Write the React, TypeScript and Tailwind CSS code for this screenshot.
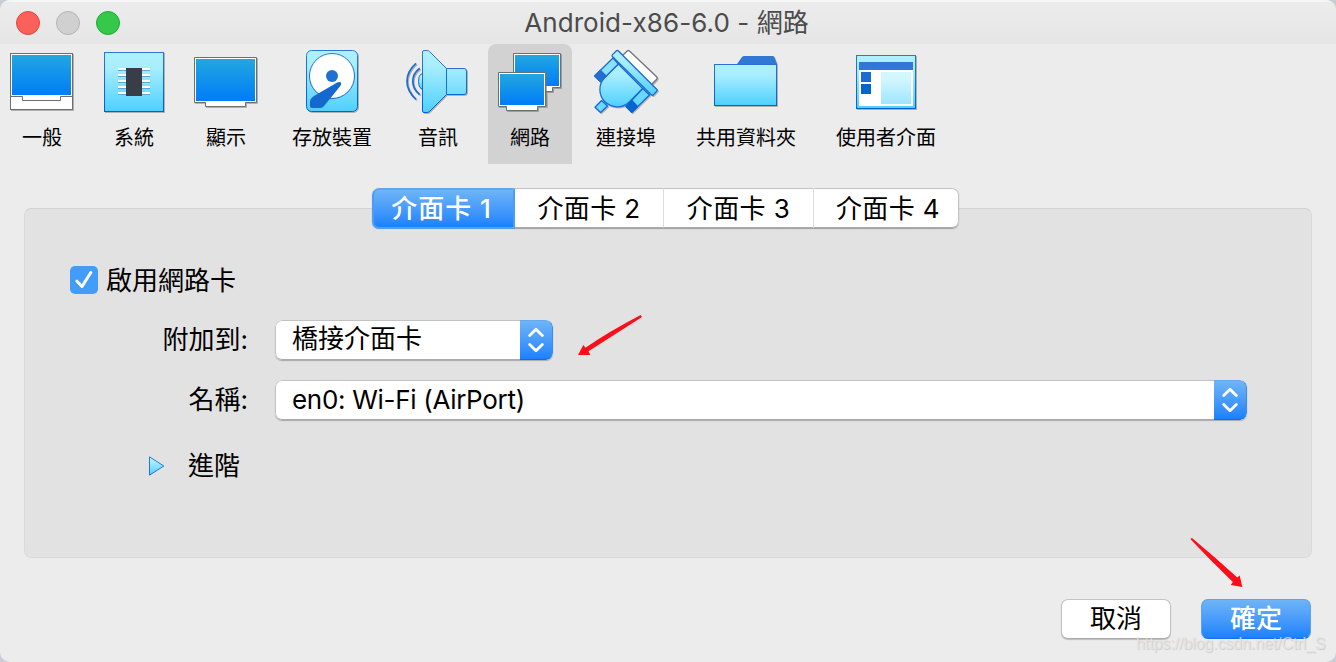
import type { ReactNode } from "react";

function Icon({ children }: { children: ReactNode }) {
  return (
    <svg
      width="64"
      height="64"
      viewBox="0 0 64 64"
      className="block shrink-0 overflow-visible drop-shadow-[1px_1px_0px_rgba(0,0,0,0.25)]"
    >
      {children}
    </svg>
  );
}

function Gradients() {
  return (
    <svg width="0" height="0" className="absolute">
      <defs>
        <linearGradient id="screen" x1="0" y1="0" x2="0" y2="1">
          <stop offset="0" stopColor="#22a7df" />
          <stop offset="1" stopColor="#007cf8" />
        </linearGradient>
        <linearGradient id="aqua" x1="0" y1="0" x2="0" y2="1">
          <stop offset="0" stopColor="#aef1ff" />
          <stop offset="0.25" stopColor="#a9eeff" />
          <stop offset="1" stopColor="#4ed0ff" />
        </linearGradient>
        <linearGradient id="edge" gradientUnits="userSpaceOnUse" x1="0" y1="0" x2="0" y2="62">
          <stop offset="0" stopColor="#3078d4" />
          <stop offset="1" stopColor="#0060d0" />
        </linearGradient>
      </defs>
    </svg>
  );
}

const GeneralIcon = () => (
  <Icon>
    <rect x="0.5" y="3.5" width="62" height="56" fill="#fff" stroke="#6f6f6f" />
    <rect x="2" y="5" width="59" height="40" fill="url(#screen)" />
    <path d="M0.5 46.5H12.5V50.5H50.5V46.5H62.5" fill="none" stroke="#6f6f6f" />
  </Icon>
);

const SystemIcon = () => (
  <Icon>
    <rect x="2.5" y="2.5" width="59" height="59" fill="url(#aqua)" stroke="url(#edge)" />
    {[18, 24, 30, 36, 42].map((y) => (
      <g key={y}>
        <rect x="16" y={y} width="32" height="2" fill="#fff" />
        <rect x="16" y={y + 2} width="32" height="1" fill="#5ba5d8" />
      </g>
    ))}
    <rect x="24" y="18" width="16" height="28" fill="#393d48" />
  </Icon>
);

const DisplayIcon = () => (
  <Icon>
    <path d="M0.5 7.5H62.5V52.5H51.5V56.5H11.5V52.5H0.5Z" fill="#fff" stroke="#6f6f6f" />
    <rect x="2" y="9" width="59" height="42" fill="url(#screen)" />
  </Icon>
);

const StorageIcon = () => (
  <Icon>
    <rect x="6.5" y="0.5" width="51" height="61" rx="5" fill="url(#aqua)" stroke="url(#edge)" />
    <circle cx="32" cy="26" r="22.5" fill="#fff" stroke="url(#edge)" />
    <circle cx="32" cy="26" r="6" fill="#2070d3" />
    <path
      d="M37.2 32.4L14 46C11 48.2 10 49.5 10 52V56Q10 58 12 58H20Q22.5 58 24.5 55.5L40.3 36C42.5 32.5 40 31 37.2 32.4Z"
      fill="#1468cf"
    />
  </Icon>
);

const AudioIcon = () => (
  <Icon>
    <path d="M16.5 24H15Q12.5 26 12.5 31.3Q12.5 36.8 15 38.7H16.5Z" fill="url(#aqua)" stroke="#1c6cd2" />
    <path
      d="M16.5 2Q16.5 0.5 18 0.5H21Q22.5 0.5 23.5 1.5L40.5 18.5H58Q60.5 18.5 60.5 21V42Q60.5 44.5 58 44.5H40.5L24 61Q22.5 62.5 21 62.5H18Q16.5 62.5 16.5 61Z"
      fill="url(#aqua)"
      stroke="url(#edge)"
    />
    <path d="M40.5 18.5V44.5" stroke="#1c6cd2" />
    <path d="M13.7 18.3Q6.8 23.5 6.8 31.3T13.7 44.6M10 13.3Q1 21.3 1 31.3T10 49.3" fill="none" stroke="#206dd2" strokeWidth="1.8" />
  </Icon>
);

const NetworkIcon = () => (
  <Icon>
    <path d="M15.5 3.5H62.5V37.5H54.5V41.5H15.5Z" fill="#fff" stroke="#6f6f6f" />
    <rect x="17" y="5" width="44" height="31" fill="url(#screen)" />
    <path d="M48.5 23V57" fill="none" stroke="#777" strokeOpacity="0.6" />
    <path d="M0.5 22.5H47.5V56.5H39.5V60.5H8.5V56.5H0.5Z" fill="#fff" stroke="#6f6f6f" />
    <rect x="2" y="24" width="44" height="31" fill="url(#screen)" />
  </Icon>
);

const PortsIcon = () => (
  <Icon>
    <g strokeWidth="1.3" strokeLinejoin="round">
      <path d="M28 6L33.2 1Q34.3 0 35.4 1L62.6 26.8Q63.6 28 62.6 29.2L57 35Z" fill="#fff" stroke="#777" />
      <path d="M7.5 50.5L1 57.3L6.6 62.5L13.5 56Z" fill="#6bd9ff" stroke="#1169d1" />
      <path d="M24.3 14L10.5 27.8A17.3 17.3 0 0 0 35 52.2L48.7 38.5Z" fill="url(#aqua)" stroke="#1c6cd2" />
      <path d="M19 8L0.7 26L6.5 31.6L24.3 14Z" fill="#88e3ff" stroke="#1c6cd2" />
      <path d="M6.3 20.3L12.3 26.2L6.6 31.8L0.6 26Z" fill="#236fd4" stroke="#236fd4" />
      <path d="M48.7 38.5L32 56.6L37.8 62.4L55.5 45Z" fill="#69d8ff" stroke="#1169d1" />
      <path d="M38 50.7L43.7 56.6L37.8 62.4L32 56.6Z" fill="#0964d2" stroke="#0964d2" />
      <path d="M22.2 1Q23.3 0 24.4 1L62.6 39.2Q63.7 40.3 62.6 41.4L59.4 44.7Q58.3 45.8 57.2 44.7L18.6 6.8Q17.5 5.7 18.6 4.6Z" fill="url(#aqua)" stroke="#1c6cd2" />
    </g>
  </Icon>
);

const FolderIcon = () => (
  <Icon>
    <path d="M23 14L28 7Q29 6 30 6H58.5Q59.7 6 60.3 7L63 14V20H23Z" fill="#3078d4" />
    <rect x="0.5" y="14.5" width="62" height="41" fill="url(#aqua)" stroke="url(#edge)" />
  </Icon>
);

const InterfaceIcon = () => (
  <Icon>
    <rect x="2.5" y="5.5" width="59" height="53" fill="url(#aqua)" stroke="url(#edge)" />
    <rect x="5" y="12" width="54" height="8" fill="#3078d4" />
    <rect x="5" y="20" width="54" height="36" fill="#fff" />
    <rect x="7" y="22" width="10" height="10" fill="#1b6cd2" />
    <rect x="7" y="34" width="10" height="10" fill="#0663d1" />
    <rect x="27" y="22" width="30" height="32" fill="url(#aqua)" opacity="0.55" />
  </Icon>
);

const tools = [
  { label: "一般", width: "w-[84px]", icon: <GeneralIcon /> },
  { label: "系統", width: "w-[84px]", icon: <SystemIcon /> },
  { label: "顯示", width: "w-[84px]", icon: <DisplayIcon /> },
  { label: "存放裝置", width: "w-[112px]", icon: <StorageIcon /> },
  { label: "音訊", width: "w-[84px]", icon: <AudioIcon /> },
  { label: "網路", width: "w-[84px]", icon: <NetworkIcon />, selected: true },
  { label: "連接埠", width: "w-[92px]", icon: <PortsIcon /> },
  { label: "共用資料夾", width: "w-[132px]", icon: <FolderIcon /> },
  { label: "使用者介面", width: "w-[132px]", icon: <InterfaceIcon /> },
];

function Select({ value, width, text }: { value: string; width: string; text: string }) {
  return (
    <button
      className={`${width} flex h-10 items-stretch overflow-hidden rounded-[7px] bg-white text-left shadow-[0_1px_1px_rgba(0,0,0,0.25)]`}
    >
      <span className="flex flex-1 items-center rounded-l-[7px] border border-r-0 border-[#c3c3c3] border-b-[#aaa] pl-4">
        <span className={text}>{value}</span>
      </span>
      <span className="flex w-[33px] items-center justify-center rounded-r-[7px] border border-l-0 border-t-[#65a9ef] border-r-[#3b8bf0] border-b-[#0f68ee] bg-linear-to-b from-[#6eb4f7] to-[#1981fd]">
        <svg width="16" height="26" viewBox="0 0 16 26" fill="none" stroke="#fff" strokeWidth="2.8" strokeLinecap="round" strokeLinejoin="round">
          <path d="M1.7 8.6L8 2.3L14.3 8.6M1.7 17.4L8 23.7L14.3 17.4" />
        </svg>
      </span>
    </button>
  );
}

export default function App() {
  return (
    <div className="h-[662px] w-[1336px] bg-[#c9cdd4] font-['Inter','Noto_Sans_CJK_TC',sans-serif] text-[26px] leading-10 text-black">
      <Gradients />
      <div className="relative flex h-full flex-col overflow-hidden rounded-[10px] bg-[#ececec]">
        <header className="grid h-11 shrink-0 grid-cols-[1fr_auto_1fr] items-center border-t-2 border-[#f6f6f6] bg-linear-to-b from-[#ececec] to-[#e6e6e6]">
          <div className="flex gap-4 pl-4">
            <span className="size-6 rounded-full border border-[#e2463f] bg-[#fc605b]" />
            <span className="size-6 rounded-full border border-[#b4b4b4] bg-[#d0d0d0]" />
            <span className="size-6 rounded-full border border-[#1fac32] bg-[#34c94a]" />
          </div>
          <h1 className="pr-[3px] text-[26px] tracking-[0.07px] text-[#4b4b4b]">Android-x86-6.0 - 網路</h1>
        </header>

        <nav className="flex h-[120px] shrink-0 gap-2">
          {tools.map((t) => (
            <button
              key={t.label}
              className={`${t.width} ${t.selected ? "rounded-t-lg bg-[#d2d2d2]" : ""} flex flex-col items-center pt-1.5 text-[20px] leading-7`}
            >
              {t.icon}
              <span className="mt-2.5">{t.label}</span>
            </button>
          ))}
        </nav>

        <div className="relative z-10 mt-6 ml-[372px] flex h-10 w-[587px] shrink-0 rounded-[7px] bg-white text-center shadow-[0_1px_1px_rgba(0,0,0,0.3)]">
          <button className="h-[41px] w-[143px] rounded-l-[7px] border-2 border-t-[#5ea7ee] border-r-[#4b9cf6] border-b-[#5c9de9] border-l-[#4c9bf4] bg-linear-to-b from-[#6eb4f7] to-[#1981fd] pr-1 leading-[37px] font-medium tracking-[1px] text-white">
            介面卡 1
          </button>
          <button className="w-[148px] border-y border-[#c3c3c3] border-b-[#aaa] pt-px leading-[38px] tracking-[0.4px]">介面卡 2</button>
          <button className="w-[150px] border-y border-l border-[#c3c3c3] border-b-[#aaa] border-l-[#ddd] pt-px leading-[38px] tracking-[0.4px]">介面卡 3</button>
          <button className="w-[146px] rounded-r-[7px] border border-[#c3c3c3] border-b-[#aaa] border-l-[#ddd] pt-px pl-1 leading-[38px] tracking-[0.4px]">介面卡 4</button>
        </div>

        <main className="-mt-5 ml-6 flex h-[350px] w-[1288px] shrink-0 flex-col rounded-[7px] border border-[#dadada] border-t-[#d2d2d2] bg-[#e2e2e2] pt-[51px] pl-[45px]">
          <label className="flex h-10 items-center gap-2">
            <span className="flex size-7 items-center justify-center rounded-[5px] bg-[#429cf9]">
              <svg width="18" height="20" viewBox="0 0 18 20" fill="none" stroke="#fff" strokeWidth="3" strokeLinecap="round" strokeLinejoin="round">
                <path d="M2 11.2L7 16.5L15.8 2.5" />
              </svg>
            </span>
            <span className="pt-0.5">啟用網路卡</span>
          </label>
          <div className="mt-5 flex gap-[27px]">
            <span className="w-[178px] text-right">附加到:</span>
            <Select value="橋接介面卡" width="w-[278px]" text="pb-0.5" />
          </div>
          <div className="mt-5 flex gap-[27px]">
            <span className="w-[178px] text-right">名稱:</span>
            <Select value="en0: Wi-Fi (AirPort)" width="w-[972px]" text="tracking-[-0.3px]" />
          </div>
          <button className="mt-[26px] ml-[78px] flex items-center gap-[23px] self-start">
            <svg width="17" height="20" viewBox="0 0 17 20">
              <path d="M1.5 0.8L15.8 10L1.5 19.2Z" fill="url(#aqua)" stroke="url(#edge)" strokeLinejoin="round" />
            </svg>
            進階
          </button>
        </main>

        <footer className="mt-[41px] flex shrink-0 justify-end gap-[30px] pr-[25px]">
          <button className="h-10 w-[110px] rounded-[7px] border border-[#c3c3c3] border-b-[#aaa] bg-white leading-9 shadow-[0_1px_1px_rgba(0,0,0,0.2)]">
            取消
          </button>
          <button className="h-10 w-[110px] rounded-[7px] border border-[#5ba3ee] border-b-[#1670ee] bg-linear-to-b from-[#6eb4f7] to-[#1981fd] leading-9 font-medium text-white">
            確定
          </button>
        </footer>

        <svg width="64" height="42" viewBox="0 0 64 42" className="absolute top-[314px] left-[578px] z-20" fill="#fc0d1b">
          <path d="M62.7 1L64 3L10.5 37.2L12.3 41L0 41L5.3 31L7.5 33.8Q30 18 62.7 1Z" />
        </svg>
        <svg width="54" height="50" viewBox="0 0 54 50" className="absolute top-[538px] left-[1190px] z-20" fill="#fc0d1b">
          <path d="M0.3 1L2 0Q26 20 47.3 39.5L49.7 37.5L52.3 49L40.7 47L42.8 44Q20 22 0.3 1Z" />
        </svg>
        <p className="absolute top-[632px] left-[1136px] z-20 font-['Liberation_Sans',sans-serif] text-[16px] leading-6 tracking-[-0.1px] whitespace-nowrap text-[#e4e4e4]/80 [text-shadow:1px_1px_1px_rgba(160,160,160,0.4)]">
          https://blog.csdn.net/Ctrl_S
        </p>
      </div>
    </div>
  );
}
